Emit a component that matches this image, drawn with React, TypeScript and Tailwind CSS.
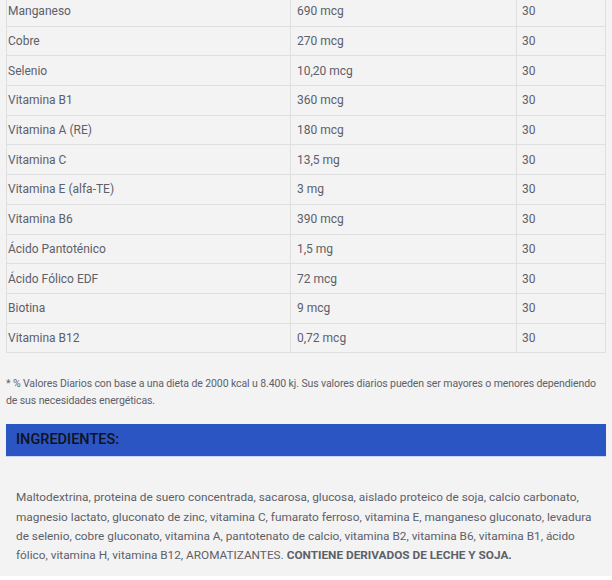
import React from "react";

const rows: [string, string, string][] = [
  ["Manganeso", "690 mcg", "30"],
  ["Cobre", "270 mcg", "30"],
  ["Selenio", "10,20 mcg", "30"],
  ["Vitamina B1", "360 mcg", "30"],
  ["Vitamina A (RE)", "180 mcg", "30"],
  ["Vitamina C", "13,5 mg", "30"],
  ["Vitamina E (alfa-TE)", "3 mg", "30"],
  ["Vitamina B6", "390 mcg", "30"],
  ["Ácido Pantoténico", "1,5 mg", "30"],
  ["Ácido Fólico EDF", "72 mcg", "30"],
  ["Biotina", "9 mcg", "30"],
  ["Vitamina B12", "0,72 mcg", "30"],
];

export default function App() {
  return (
    <div
      className="min-h-screen bg-[#f3f3f3] px-[6px] text-[#5d6069]"
      style={{ fontFamily: "Roboto, 'Noto Sans', sans-serif" }}
    >
      <table className="-mt-[4px] w-[600px] border-collapse border border-[#dfdfdf] text-[12px]">
        <tbody>
          {rows.map(([name, amount, vd]) => (
            <tr key={name} className="h-[29.7px] border-t border-[#dfdfdf]">
              <td className="w-[284px] pl-[1px] align-middle">{name}</td>
              <td className="w-[226px] border-l border-[#dfdfdf] pl-[6px] align-middle">{amount}</td>
              <td className="border-l border-[#dfdfdf] pl-[5px] align-middle">{vd}</td>
            </tr>
          ))}
        </tbody>
      </table>

      <p className="mt-[22px] text-[10.5px] leading-[17px] tracking-[-0.1px]">
        * % Valores Diarios con base a una dieta de 2000 kcal u 8.400 kj. Sus valores diarios pueden ser mayores o menores dependiendo de sus necesidades energéticas.
      </p>

      <div className="mt-[15px] flex h-[33px] items-center border-b border-[#c9d3ee] bg-[#2b55c2] pl-[10px]">
        <h3 className="text-[14.5px] font-medium text-[#10121c]">INGREDIENTES:</h3>
      </div>

      <p className="mt-[31px] whitespace-nowrap pl-[10px] text-[11.8px] leading-[19.4px]">
        Maltodextrina, proteina de suero concentrada, sacarosa, glucosa, aislado proteico de soja, calcio carbonato,
        <br />
        magnesio lactato, gluconato de zinc, vitamina C, fumarato ferroso, vitamina E, manganeso gluconato, levadura
        <br />
        de selenio, cobre gluconato, vitamina A, pantotenato de calcio, vitamina B2, vitamina B6, vitamina B1, ácido
        <br />
        fólico, vitamina H, vitamina B12, AROMATIZANTES.{" "}
        <strong className="font-bold">CONTIENE DERIVADOS DE LECHE Y SOJA.</strong>
      </p>
    </div>
  );
}
